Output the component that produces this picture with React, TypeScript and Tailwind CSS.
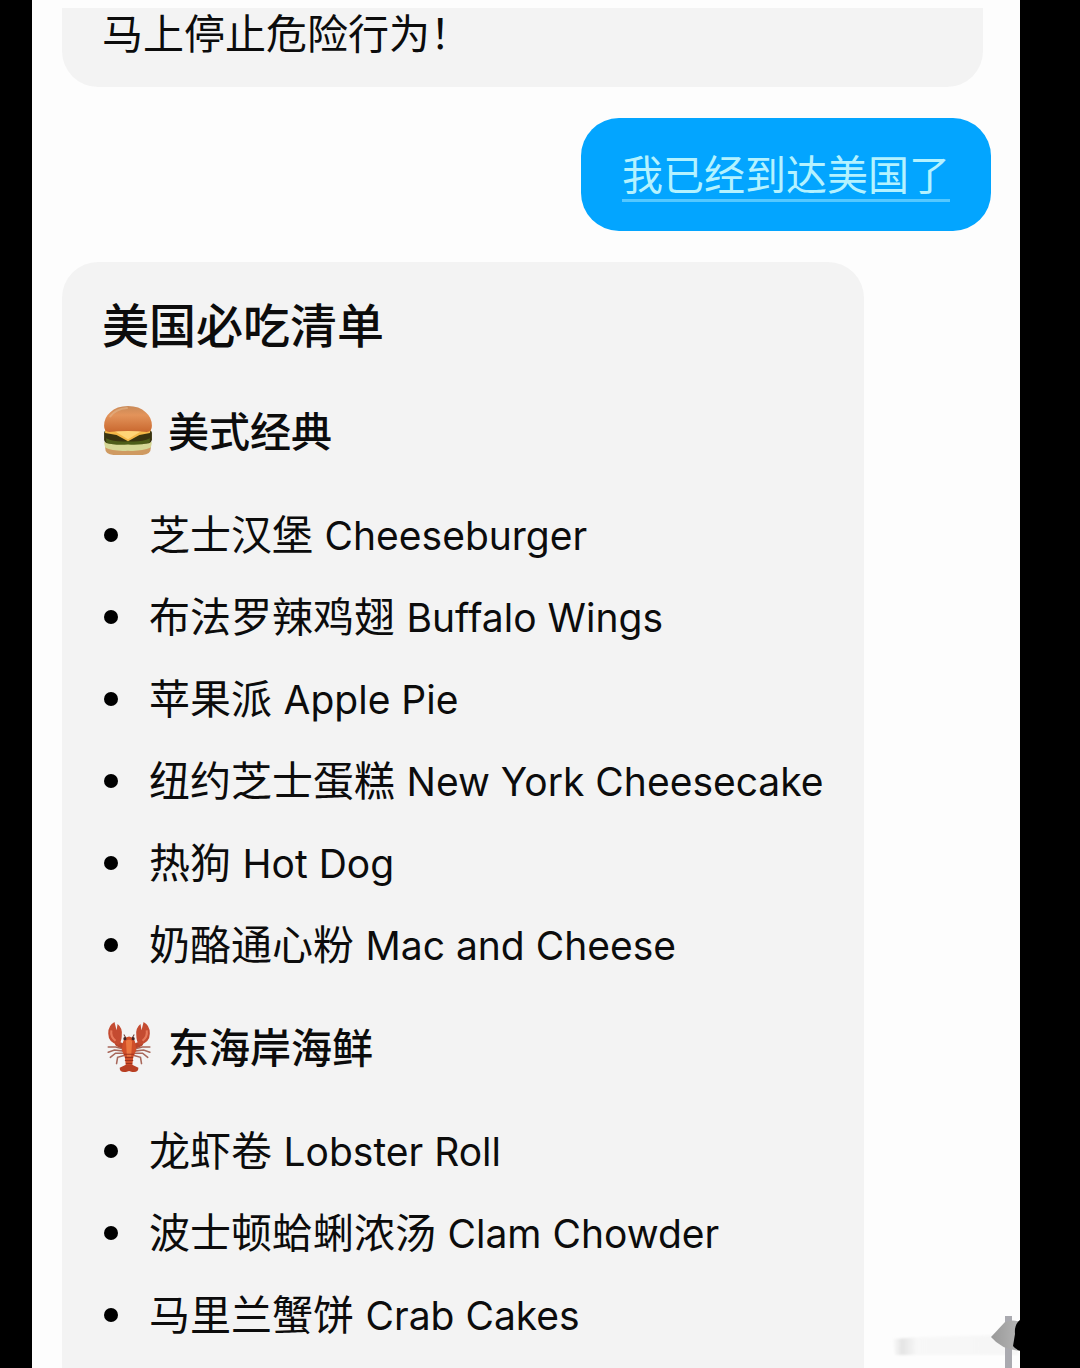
import type { ReactNode } from "react";

type Dish = { zh: string; en: string };

const classics: Dish[] = [
  { zh: "芝士汉堡", en: "Cheeseburger" },
  { zh: "布法罗辣鸡翅", en: "Buffalo Wings" },
  { zh: "苹果派", en: "Apple Pie" },
  { zh: "纽约芝士蛋糕", en: "New York Cheesecake" },
  { zh: "热狗", en: "Hot Dog" },
  { zh: "奶酪通心粉", en: "Mac and Cheese" },
];

const seafood: Dish[] = [
  { zh: "龙虾卷", en: "Lobster Roll" },
  { zh: "波士顿蛤蜊浓汤", en: "Clam Chowder" },
  { zh: "马里兰蟹饼", en: "Crab Cakes" },
];

function Burger() {
  return (
    <svg viewBox="0 2 50 50" className="size-[52px] shrink-0" aria-hidden="true">
      <defs>
        <linearGradient id="bun" x1="0" y1="0" x2="0" y2="1">
          <stop offset="0" stopColor="#c98a58" />
          <stop offset=".35" stopColor="#e3935a" />
          <stop offset="1" stopColor="#c9682f" />
        </linearGradient>
      </defs>
      <path d="M3 36h44v6q0 7-8 7H11q-8 0-8-7z" fill="#cf9a61" />
      <path d="M2 37q5-4 11-2 6 2 12 1 7 2 12-1 6-2 11 2l-1 5q-10 4-22 3Q11 46 3 42z" fill="#d5d796" />
      <path d="M2 28q0-3 4-3h38q4 0 4 3v6q0 4-5 4H7q-5 0-5-4z" fill="#38330f" />
      <path d="M4 33q8 4 21 3 13 1 21-3v4q-9 3-21 2Q11 40 4 37z" fill="#4d5c19" />
      <path d="M3 24h44l-1 4-10 2-11 6-11-6-11-2z" fill="#f4b848" />
      <path d="M12 26h26l-13 8z" fill="#ffd577" />
      <path d="M2 21q0-8 6-13Q14 2 25 2t17 6q6 5 6 13 0 6-5 6-8-1-18-1T7 27q-5 0-5-6z" fill="url(#bun)" />
      <path d="M8 12q5-7 16-8" fill="none" stroke="#e3b58b" strokeWidth="2" strokeLinecap="round" opacity=".6" />
    </svg>
  );
}

function Lobster() {
  return (
    <svg viewBox="-1 1 50 50" className="size-[52px] shrink-0" aria-hidden="true">
      <g fill="none" stroke="#a8675a" strokeWidth="1.5" strokeLinecap="round">
        <path d="M20 27 12 25 5 25M20 29 11 28 5 30M20 31 12 31 7 35M21 33 14 35 13 41" />
        <path d="M30 27 38 25 45 25M30 29 39 28 45 30M30 31 38 31 43 35M29 33 36 35 37 41" />
      </g>
      <path d="M21 25 14 22 12 17M29 25 36 22 38 17" fill="none" stroke="#b8452b" strokeWidth="5" strokeLinejoin="round" />
      <path d="M15 23Q5 21 5 12 5 4 11 1l2 8 1-6q5 4 4 11 0 6-3 9z" fill="#c44b31" />
      <path d="M35 23q10-2 10-11 0-8-6-11l-2 8-1-6q-5 4-4 11 0 6 3 9z" fill="#c44b31" />
      <path d="M8 9q-1 6 4 10M42 9q1 6-4 10" fill="none" stroke="#e7795a" strokeWidth="2" />
      <path d="M23 18 20 13M27 18 30 13" stroke="#6e3a32" strokeWidth="1" />
      <path d="M19 21q1-5 6-6 5 1 6 6l1 7-3 7-1 9h-6l-1-9-3-7z" fill="#d04e28" />
      <path d="M22 19q3-2 6 0l-1 16h-4z" fill="#ec7640" />
      <path d="M20 32h10M21 35h8M21 38h8M22 41h6" stroke="#9c321d" strokeWidth="1" />
      <path d="m22 42-6 3q0 5 6 4l3-1 3 1q6 1 6-4l-6-3z" fill="#b83f23" />
      <circle cx="21" cy="17" r="1.5" fill="#432322" />
      <circle cx="29" cy="17" r="1.5" fill="#432322" />
    </svg>
  );
}

function Section({ icon, title, dishes }: { icon: ReactNode; title: string; dishes: Dish[] }) {
  return (
    <section>
      <h3 className="flex items-center gap-[14px] text-[41px] leading-[60px] font-medium">
        {icon}
        {title}
      </h3>
      <ul className="mt-8">
        {dishes.map((dish) => (
          <li key={dish.en} className="flex h-[82px] items-center text-[41px] leading-[60px] whitespace-nowrap">
            <span className="mr-[31px] ml-[2px] size-[14px] shrink-0 rounded-full bg-black" />
            <span>
              {dish.zh} <span className="text-[39px]">{dish.en}</span>
            </span>
          </li>
        ))}
      </ul>
    </section>
  );
}

function CornerMark() {
  return (
    <svg viewBox="0 0 200 68" className="absolute right-0 bottom-0 h-[68px] w-[200px]" aria-hidden="true">
      <defs>
        <linearGradient id="smudge" x1="0" y1="0" x2="1" y2="0">
          <stop offset="0" stopColor="#e6e6e6" stopOpacity="0" />
          <stop offset=".08" stopColor="#e4e4e4" />
          <stop offset=".2" stopColor="#f8f8f8" />
          <stop offset="1" stopColor="#f6f6f6" />
        </linearGradient>
        <linearGradient id="wedge" x1="0" y1="0" x2="1" y2="0">
          <stop offset="0" stopColor="#999" />
          <stop offset="1" stopColor="#b5b5b5" />
        </linearGradient>
        <filter id="soft">
          <feGaussianBlur stdDeviation="1" />
        </filter>
      </defs>
      <path d="M12 39 43 37 115 35 126 43 138 49v6H15z" fill="url(#smudge)" filter="url(#soft)" />
      <path d="M125 16h7v52h-7z" fill="#aaaab0" />
      <path d="M111 37 125 22q8-3 15 0v29q-18-1-29-14z" fill="url(#wedge)" />
      <path d="M141 19q-7 5-6 15l-2 12q3 4 8 5z" fill="#000" />
    </svg>
  );
}

export default function App() {
  return (
    <div className="relative h-screen overflow-hidden bg-black pr-[60px] pl-8 font-['Inter','Noto_Sans_CJK_SC',sans-serif] text-[#0c0c0c]">
      <main lang="zh-CN" className="flex h-full flex-col items-start gap-[31px] overflow-hidden bg-[#fdfdfd] pt-2 pr-[29px] pl-[30px]">
        <div className="shrink-0 self-stretch pr-2">
          <p className="rounded-b-[36px] bg-[#f3f3f3] px-10 pb-[27px] text-[41px] leading-[52px]">马上停止危险行为！</p>
        </div>
        <div className="shrink-0 self-end rounded-[38px] bg-[#03a5ff] px-[41px] pt-[33px] pb-[29px] text-[41px] text-[#b4f2ff]">
          <a href="#usa" className="block border-b-[3px] border-[#55c8ff] leading-[48px]">
            我已经到达美国了
          </a>
        </div>
        <article id="usa" className="shrink-0 rounded-[36px] bg-[#f3f3f3] px-10 pt-8 pb-16">
          <h2 className="mb-[44px] text-[47px] leading-[64px] font-medium">美国必吃清单</h2>
          <div className="flex flex-col gap-8">
            <Section icon={<Burger />} title="美式经典" dishes={classics} />
            <Section icon={<Lobster />} title="东海岸海鲜" dishes={seafood} />
          </div>
        </article>
      </main>
      <CornerMark />
    </div>
  );
}
